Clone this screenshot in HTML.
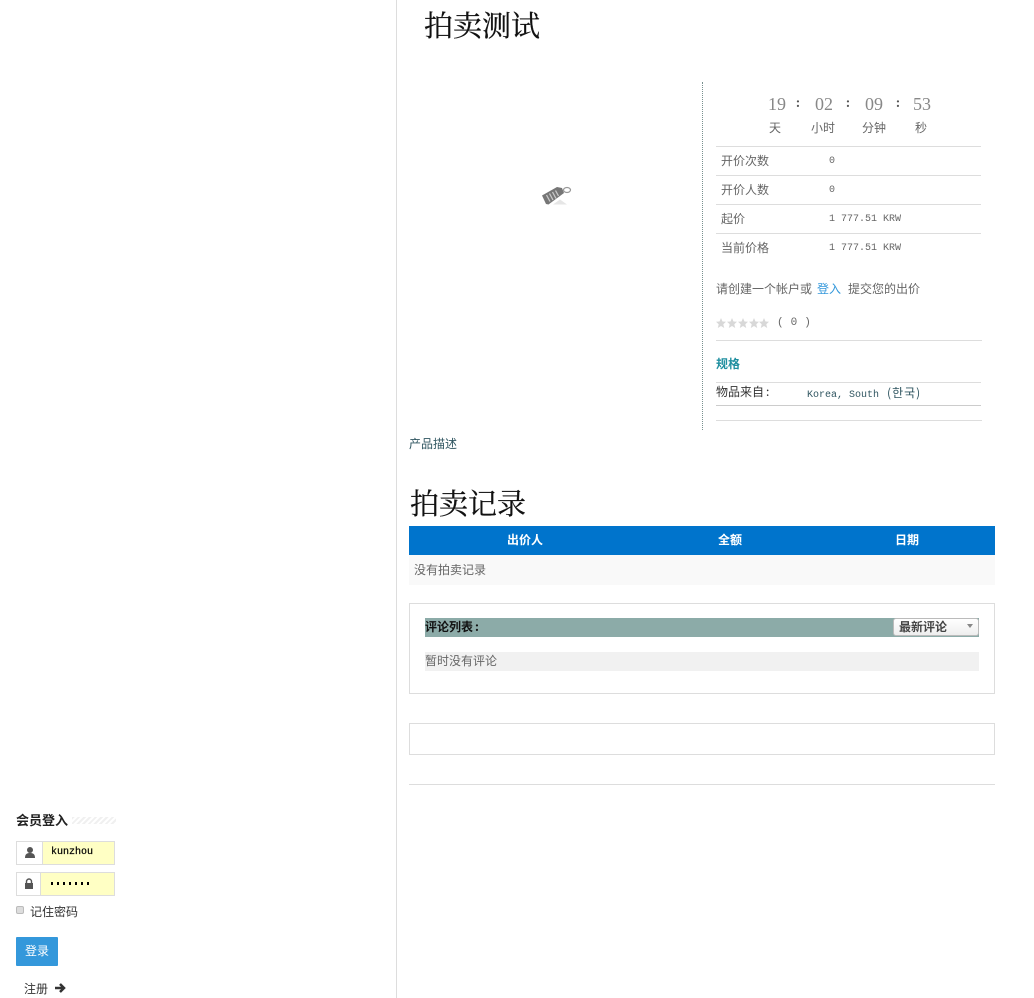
<!DOCTYPE html>
<html><head><meta charset="utf-8"><style>
html,body{margin:0;padding:0;background:#fff;width:1034px;height:998px;overflow:hidden}
body{position:relative;font:12px/16px "WenQuanYi Zen Hei","Noto Sans CJK SC",sans-serif;color:#666}
.a{position:absolute;white-space:nowrap}
.l{position:absolute;height:1px;background:#ddd}
.m{font-family:"Liberation Mono","WenQuanYi Zen Hei",monospace;font-size:10px}
.m span{font:12px/16px "WenQuanYi Zen Hei","Noto Sans CJK KR",sans-serif;margin-left:2px;letter-spacing:1px}
h1{position:absolute;margin:0;font:normal 29px/36px "Noto Serif CJK SC",serif;color:#111;white-space:nowrap;-webkit-text-stroke:.25px #111}
.n{font:18px/20px "Liberation Serif",serif;color:#888}
</style></head><body>
<div class="a" style="left:396px;top:0;width:1px;height:998px;background:#ddd"></div>
<h1 style="left:424px;top:7px">拍卖测试</h1>
<svg class="a" style="left:540px;top:184px" width="32" height="24" viewBox="0 0 32 24"><path d="M13 20.500h14l-7-5z" fill="#e6e6e6"/><path d="M2 11.500L17 3l5 1 2 5L8.500 20.500 6 20z" fill="#767676"/><path d="M6.500 11l3.500 6.500M9.500 9.500l3.500 6.500M12.500 8l3.500 6.500M15.500 6.500l3 5.500" stroke="#c8c8c8" stroke-width="1.300" fill="none"/><ellipse cx="27" cy="6" rx="3.500" ry="2.500" fill="none" stroke="#999" stroke-width="1.200"/></svg>
<div class="a" style="left:702px;top:82px;height:348px;border-left:1px dotted #78908f"></div>

<div class="a n" style="left:768px;top:94px">19</div><div class="a" style="left:796px;top:95px;color:#555;font-weight:bold">:</div>
<div class="a n" style="left:815px;top:94px">02</div><div class="a" style="left:846px;top:95px;color:#555;font-weight:bold">:</div>
<div class="a n" style="left:865px;top:94px">09</div><div class="a" style="left:896px;top:95px;color:#555;font-weight:bold">:</div>
<div class="a n" style="left:913px;top:94px">53</div>
<div class="a" style="left:769px;top:120px">天</div><div class="a" style="left:811px;top:120px">小时</div><div class="a" style="left:862px;top:120px">分钟</div><div class="a" style="left:915px;top:120px">秒</div>

<div class="l" style="left:716px;top:146px;width:265px"></div>
<div class="a" style="left:721px;top:153px">开价次数</div><div class="a m" style="left:829px;top:154px">0</div>
<div class="l" style="left:716px;top:175px;width:265px"></div>
<div class="a" style="left:721px;top:182px">开价人数</div><div class="a m" style="left:829px;top:183px">0</div>
<div class="l" style="left:716px;top:204px;width:265px"></div>
<div class="a" style="left:721px;top:211px">起价</div><div class="a m" style="left:829px;top:212px">1 777.51 KRW</div>
<div class="l" style="left:716px;top:233px;width:265px"></div>
<div class="a" style="left:721px;top:240px">当前价格</div><div class="a m" style="left:829px;top:241px">1 777.51 KRW</div>

<div class="a" style="left:716px;top:281px">请创建一个帐户或</div><div class="a" style="left:817px;top:281px;color:#3498db">登入</div><div class="a" style="left:848px;top:281px">提交您的出价</div>
<svg class="a" style="left:716px;top:318px" width="54" height="11" viewBox="0 0 54 11" fill="#d8d8d8"><path d="M5 0l1.500 3.500 3.500.3-2.700 2.400.9 3.800L5 8 1.800 10l.9-3.800L0 3.800l3.500-.3z"/><path transform="translate(11)" d="M5 0l1.500 3.500 3.500.3-2.700 2.400.9 3.800L5 8 1.800 10l.9-3.800L0 3.800l3.500-.3z"/><path transform="translate(22)" d="M5 0l1.500 3.500 3.500.3-2.700 2.400.9 3.800L5 8 1.800 10l.9-3.800L0 3.800l3.500-.3z"/><path transform="translate(33)" d="M5 0l1.500 3.500 3.500.3-2.700 2.400.9 3.800L5 8 1.800 10l.9-3.800L0 3.800l3.500-.3z"/><path transform="translate(43)" d="M5 0l1.500 3.500 3.500.3-2.700 2.400.9 3.800L5 8 1.800 10l.9-3.800L0 3.800l3.500-.3z"/></svg>
<div class="a m" style="left:777px;top:315px;font-size:11px;letter-spacing:.2px">( 0 )</div>
<div class="l" style="left:716px;top:340px;width:266px"></div>
<div class="a" style="left:716px;top:356px;color:#1f8fa0;font-weight:bold">规格</div>
<div class="l" style="left:716px;top:382px;width:265px"></div>
<div class="a" style="left:716px;top:384px;color:#333">物品来自<span style="margin-left:2px">:</span></div>
<div class="a m" style="left:807px;top:385px;color:#2f5560">Korea, South <span>(한국)</span></div>
<div class="l" style="left:716px;top:405px;width:265px;background:#ccc"></div>
<div class="l" style="left:716px;top:420px;width:266px"></div>

<div class="a" style="left:409px;top:436px;color:#2f5560">产品描述</div>
<h1 style="left:410px;top:485px">拍卖记录</h1>
<div class="a" style="left:409px;top:526px;width:586px;height:29px;background:#0074cc"></div>
<div class="a" style="left:507px;top:532px;color:#fff;font-weight:bold">出价人</div>
<div class="a" style="left:718px;top:532px;color:#fff;font-weight:bold">全额</div>
<div class="a" style="left:895px;top:532px;color:#fff;font-weight:bold">日期</div>
<div class="a" style="left:409px;top:555px;width:586px;height:30px;background:#f9f9f9"></div>
<div class="a" style="left:414px;top:562px">没有拍卖记录</div>

<div class="a" style="left:409px;top:603px;width:584px;height:89px;border:1px solid #ddd"></div>
<div class="a" style="left:425px;top:618px;width:554px;height:19px;background:#8caba8"></div>
<div class="a" style="left:425px;top:619px;color:#111;font-weight:bold">评论列表<span style="margin-left:2px">:</span></div>
<div class="a" style="left:893px;top:618px;width:84px;height:16px;background:linear-gradient(#fff,#eee);border:1px solid #bbb;border-radius:3px"></div>
<div class="a" style="left:899px;top:619px;color:#444;font-weight:bold">最新评论</div>
<div class="a" style="left:967px;top:624px;width:0;height:0;border:3px solid transparent;border-top:4px solid #888"></div>
<div class="a" style="left:425px;top:652px;width:554px;height:19px;background:#f1f1f1"></div>
<div class="a" style="left:425px;top:653px">暂时没有评论</div>

<div class="a" style="left:409px;top:723px;width:584px;height:30px;border:1px solid #ddd"></div>
<div class="l" style="left:409px;top:784px;width:586px"></div>

<div class="a" style="left:16px;top:812px;color:#222;font-weight:bold;font-size:13px">会员登入</div>
<div class="a" style="left:72px;top:817px;width:44px;height:7px;background:repeating-linear-gradient(135deg,#f0f0f0 0 2px,#fff 2px 4px)"></div>
<div class="a" style="left:16px;top:841px;width:25px;height:22px;border:1px solid #ddd;background:#fff"></div>
<div class="a" style="left:42px;top:841px;width:71px;height:22px;border:1px solid #ddd;background:#ffffc4"></div>
<svg class="a" style="left:24px;top:846px" width="12" height="13" viewBox="0 0 12 13"><circle cx="6" cy="4" r="3" fill="#555"/><path d="M1 12c0-4 2-5 5-5s5 1 5 5z" fill="#555"/></svg>
<div class="a" style="left:51px;top:846px;color:#000;font:10px/14px 'Liberation Mono',monospace;-webkit-text-stroke:.2px #000">kunzhou</div>
<div class="a" style="left:16px;top:872px;width:23px;height:22px;border:1px solid #ddd;background:#fff"></div>
<div class="a" style="left:40px;top:872px;width:73px;height:22px;border:1px solid #ddd;background:#ffffc4"></div>
<svg class="a" style="left:24px;top:878px" width="10" height="11" viewBox="0 0 10 11"><path d="M2.500 5V3.500a2.500 2.500 0 0 1 5 0V5" fill="none" stroke="#555" stroke-width="1.400"/><rect x="1" y="5" width="8" height="6" fill="#555"/></svg>
<div class="a" style="left:51px;top:882px;width:39px;height:3px;background:repeating-linear-gradient(90deg,#000 0 2px,transparent 2px 6px)"></div>
<div class="a" style="left:16px;top:906px;width:6px;height:6px;background:#ddd;border:1px solid #bbb;border-radius:2px"></div>
<div class="a" style="left:30px;top:904px;color:#333">记住密码</div>
<div class="a" style="left:16px;top:937px;width:42px;height:29px;background:#3498db;border-radius:1px"></div>
<div class="a" style="left:25px;top:943px;color:#fff">登录</div>
<div class="a" style="left:24px;top:981px;color:#333">注册</div>
<svg class="a" style="left:54px;top:982px" width="12" height="12" viewBox="0 0 12 12"><path d="M1 6h8M6 2l4 4-4 4" fill="none" stroke="#333" stroke-width="2.500"/></svg>
</body></html>
